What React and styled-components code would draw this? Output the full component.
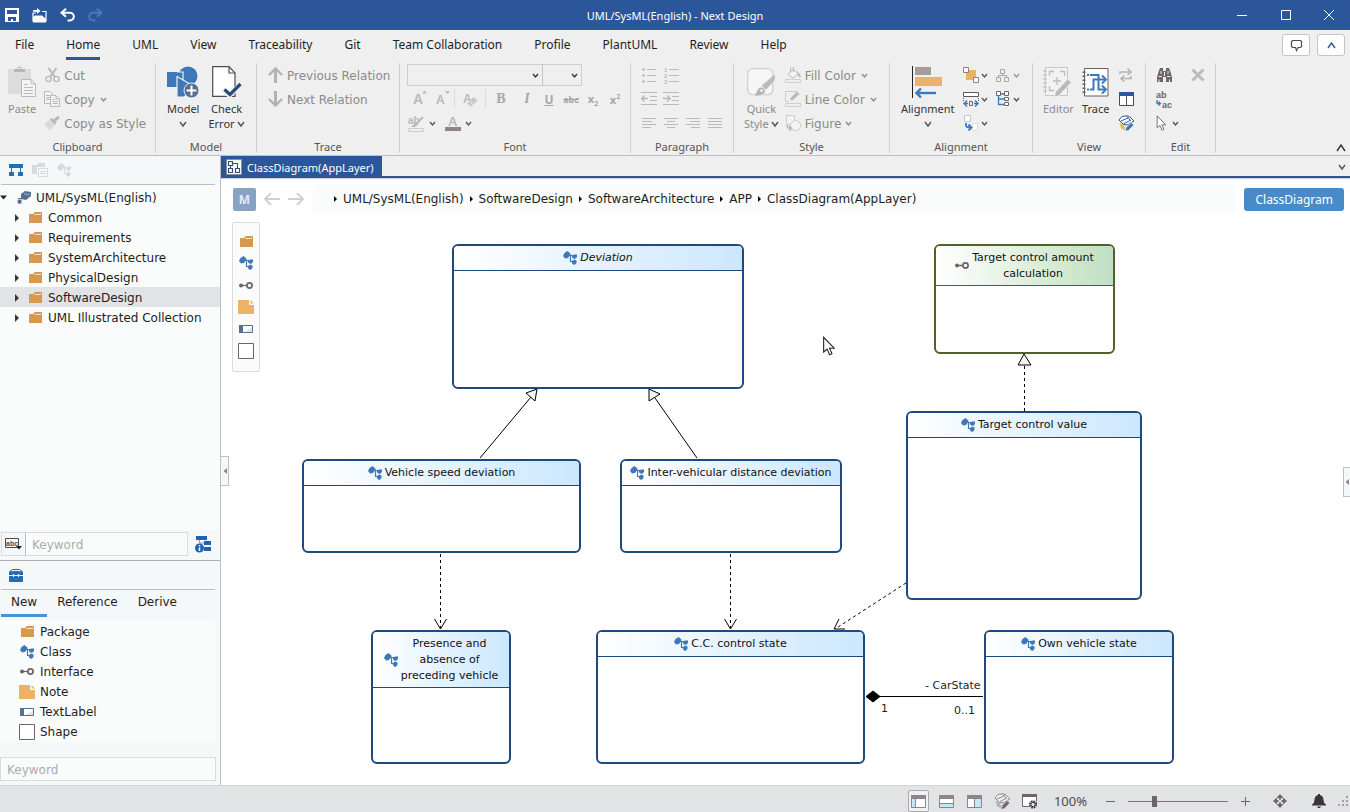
import { useState } from 'react';
import styled, { createGlobalStyle, ThemeProvider } from 'styled-components';

const theme = {
	colors: {
		brand: '#2b579a',
		chrome: '#efefef',
		panel: '#f5f8f8',
		list: '#fafcfc',
		line: '#bdbfc0',
		soft: '#d9dbdc',
		text: '#1e1e1e',
		muted: '#8b8b8b',
		faint: '#b9b9b9',
		blue: '#3d79b8',
		orange: '#d7994c',
		note: '#ebb366',
		slate: '#54708f',
		plum: '#6f6468',
	},
	fonts: {
		ui: "'Noto Sans', 'Open Sans', sans-serif",
		wide: "'DejaVu Sans', 'Noto Sans', sans-serif",
	},
	fontSizes: {
		s: '11px',
		m: '12px',
		l: '13px',
	},
};

const c = theme.colors;

const GlobalStyle = createGlobalStyle`
	* {
		box-sizing: border-box;
	}

	body {
		margin: 0;
		font-family: ${theme.fonts.ui};
		font-size: 12px;
		color: ${c.text};
	}

	button, input, select {
		font: inherit;
		color: inherit;
	}

	button {
		background: none;
		border: 0;
		padding: 0;
	}

	svg {
		display: block;
		flex: none;
	}
`;

/* ---------- icons ---------- */

const Svg = ({ w = 16, h = 16, children, ...rest }) => (
	<svg
		width={w}
		height={h}
		viewBox={`0 0 ${w} ${h}`}
		fill='none'
		aria-hidden='true'
		{...rest}
	>
		{children}
	</svg>
);

const Chevron = ({ color = '#555', up = false, size = 7 }) => (
	<Svg w={size} h={size}>
		<path
			d={
				up
					? `M1 ${size - 2} L${size / 2} 2 L${size - 1} ${size - 2}`
					: `M1 2 L${size / 2} ${size - 2} L${size - 1} 2`
			}
			stroke={color}
			strokeWidth='1.4'
		/>
	</Svg>
);

const SaveIcon = () => (
	<Svg w={14} h={14}>
		<path d='M0 0H14V14H0z' fill='#fff' />
		<path d='M2 2H12V6H2zM3 9H11V13H8V11H6V13H3z' fill={c.brand} />
	</Svg>
);

const OpenIcon = () => (
	<Svg w={15} h={15}>
		<path d='M1 13.5V5H4M10 3.5H14V13.5' stroke='#fff' strokeWidth='1.2' />
		<path d='M1 14.5V9L3 7.5H10L14 11V14.5z' fill='#fff' />
		<path d='M1 3.5V2H5V0L8.5 3L5 6V4z' fill='#fff' />
	</Svg>
);

const UndoIcon = ({ color = '#fff', flip = false }) => (
	<Svg w={15} h={14} transform={flip ? 'scale(-1 1)' : undefined}>
		<path d='M6 0.8L1.5 4.8L6 8.8' stroke={color} strokeWidth='2' />
		<path
			d='M2 4.8H10A3.8 3.8 0 0 1 10 12.4H7.5'
			stroke={color}
			strokeWidth='2'
		/>
	</Svg>
);

const PasteIcon = () => (
	<Svg w={28} h={32}>
		<path d='M0 3H23V28H0z' fill='#dcdcdc' />
		<path d='M6 6V3H9A2.5 2.5 0 0 1 14 3H17V6z' fill='#b5b5b5' />
		<path d='M10 2.5H13' stroke='#efefef' />
		<path
			d='M13.5 13.5H23L27.5 18V30.5H13.5z'
			fill='#f4f4f4'
			stroke='#b9b9b9'
		/>
		<path
			d='M23 13.5V18H27.5M16 18.5H20M16 21.5H25M16 24.5H25M16 27.5H25'
			stroke='#b9b9b9'
		/>
	</Svg>
);

const CutIcon = () => (
	<Svg w={15} h={16}>
		<path d='M3.5 1L10 10M11.5 1L5 10' stroke={c.faint} strokeWidth='2' />
		<circle cx='3.5' cy='12' r='2.6' stroke={c.faint} strokeWidth='1.4' />
		<circle cx='11.5' cy='12' r='2.6' stroke={c.faint} strokeWidth='1.4' />
	</Svg>
);

const CopyIcon = () => (
	<Svg w={16} h={16}>
		<path
			d='M0.5 0.5H6L8.5 3V12.5H0.5z'
			fill='#f4f4f4'
			stroke={c.faint}
		/>
		<path d='M2 4.5H6M2 6.5H6M2 8.5H6' stroke={c.faint} />
		<path
			d='M6.5 4.5H12L15.5 8V15.5H6.5z'
			fill='#f4f4f4'
			stroke={c.faint}
		/>
		<path
			d='M12 4.5V8H15.5M8.5 8.5H11M8.5 10.5H14M8.5 12.5H14'
			stroke={c.faint}
		/>
	</Svg>
);

const BrushIcon = () => (
	<Svg w={16} h={15}>
		<path d='M0 8L5 4L10 9.5L6 14.5z' fill='#d6dadd' />
		<path d='M5.5 3.5L8 2L12.5 7L10.5 9z' fill={c.faint} />
		<path d='M10 5L15 0.8' stroke={c.faint} strokeWidth='3' />
	</Svg>
);

const ModelIcon = () => (
	<Svg w={32} h={32}>
		<circle cx='21' cy='10' r='9.5' fill={c.blue} />
		<path d='M0 6H16V21H0z' fill={c.blue} />
		<path d='M10 6H16V14' stroke={c.chrome} strokeWidth='1.2' />
		<path
			d='M10 10.5L30 22L17 31H10z'
			fill={c.blue}
			stroke={c.chrome}
			strokeWidth='1.2'
		/>
		<circle
			cx='24.5'
			cy='24.5'
			r='7.5'
			fill={c.slate}
			stroke={c.chrome}
		/>
		<path d='M19.5 24.5H29.5M24.5 19.5V29.5' stroke='#fff' strokeWidth='2' />
	</Svg>
);

const CheckErrorIcon = () => (
	<Svg w={30} h={32}>
		<path
			d='M0.7 0.7H17L23 7V30.3H0.7z'
			fill='#fff'
			stroke='#54494d'
			strokeWidth='1.2'
		/>
		<path d='M17 0.7V7H23' stroke='#54494d' strokeWidth='1.2' />
		<path d='M11 23.5L17.5 29.5L29 18' stroke={c.chrome} strokeWidth='5' />
		<path d='M12.5 23.5L18 28.5L28.5 18' stroke='#244e7d' strokeWidth='3.2' />
	</Svg>
);

const RelationArrow = ({ down = false }) => (
	<Svg w={15} h={16} transform={down ? 'scale(1 -1)' : undefined}>
		<path d='M7.5 16V2' stroke='#b2b2b2' strokeWidth='3' />
		<path d='M1 8L7.5 1.5L14 8' stroke='#b2b2b2' strokeWidth='2.4' />
	</Svg>
);

const Letters = styled.text`
	font-family: 'Liberation Sans', sans-serif;
	font-weight: 700;
	fill: ${props => props.$fill || props.theme.colors.faint};
`;

const EraserIcon = () => (
	<Svg w={15} h={15}>
		<Letters x='0' y='11' fontSize='12'>
			A
		</Letters>
		<path d='M4 11.5L10.5 5L14.5 8.5L8.5 14.5z' fill='#c9c9c9' />
		<path d='M6.5 9L10.5 13' stroke={c.chrome} />
	</Svg>
);

const HighlightIcon = () => (
	<Svg w={17} h={18}>
		<Letters x='0' y='10' fontSize='10'>
			ab
		</Letters>
		<path d='M15 3L8 10' stroke={c.faint} strokeWidth='2' />
		<path d='M3 13L8 8.5L10 10.5L7 13z' fill={c.faint} />
		<path d='M0.5 14.5H15.5V17.5H0.5z' stroke='#cfcfcf' />
	</Svg>
);

const FontColorIcon = () => (
	<Svg w={16} h={16}>
		<Letters x='3' y='11' fontSize='13'>
			A
		</Letters>
		<path d='M0 12H16V16H0z' fill='#8f8389' />
	</Svg>
);

const FontSizeIcon = ({ size = 14, down = false }) => (
	<Svg w={14} h={18}>
		<Letters x='0' y='14' fontSize={size}>
			A
		</Letters>
		<path d={down ? 'M9 1H14L11.5 4z' : 'M9 3.5H14L11.5 0.5z'} fill={c.faint} />
	</Svg>
);

const BulletIcon = () => (
	<Svg w={15} h={16}>
		<path
			d='M5 2.5H14M5 8.5H14M5 14.5H14'
			stroke={c.faint}
			shapeRendering='crispEdges'
		/>
		<circle cx='1.5' cy='2.5' r='1.3' fill={c.faint} />
		<circle cx='1.5' cy='8.5' r='1.3' fill={c.faint} />
		<circle cx='1.5' cy='14.5' r='1.3' fill={c.faint} />
	</Svg>
);

const NumberedIcon = () => (
	<Svg w={15} h={20}>
		<path
			d='M5 4.5H15M5 10.5H15M5 16.5H15'
			stroke={c.faint}
			shapeRendering='crispEdges'
		/>
		{[1, 2, 3].map(n => (
			<Letters key={n} x='0' y={n * 6 + 1} fontSize='6'>
				{n}
			</Letters>
		))}
	</Svg>
);

const IndentIcon = ({ out = false }) => (
	<Svg w={16} h={14}>
		<path
			d='M0 0.5H16M9 4.5H16M9 8.5H16M0 12.5H16'
			stroke={c.faint}
			shapeRendering='crispEdges'
		/>
		<path d='M0 6.5H7' stroke={c.faint} strokeWidth='1.5' />
		<path
			d={out ? 'M3.5 3.5L0.8 6.5L3.5 9.5' : 'M4 3.5L7 6.5L4 9.5'}
			stroke={c.faint}
			strokeWidth='1.5'
		/>
	</Svg>
);

const alignLines = {
	left: 'M0 0.5H14M0 3.5H10M0 6.5H14M0 9.5H9',
	center: 'M0 0.5H14M3 3.5H11M0 6.5H14M3 9.5H11',
	right: 'M0 0.5H14M4 3.5H14M0 6.5H14M5 9.5H14',
	justify: 'M0 0.5H14M0 3.5H14M0 6.5H14M0 9.5H14',
};

const AlignTextIcon = ({ kind }) => (
	<Svg w={14} h={11}>
		<path
			d={alignLines[kind]}
			stroke={c.faint}
			shapeRendering='crispEdges'
		/>
	</Svg>
);

const QuickStyleIcon = () => (
	<Svg w={28} h={30}>
		<rect
			x='0.7'
			y='1.7'
			width='25'
			height='26'
			rx='5'
			fill='#f6f6f6'
			stroke='#d0d0d0'
			strokeWidth='1.3'
		/>
		<path
			d='M28 7V13L19 23L14.5 18.5z'
			fill='#b9b9b9'
			stroke={c.chrome}
			strokeWidth='0.6'
		/>
		<path
			d='M6 28.5C10 27.5 9 21 14 20C18 20 20 25 16 27.5C13 29.5 9 29.5 6 28.5z'
			fill='#b3b3b3'
			stroke={c.chrome}
		/>
		<circle cx='14.5' cy='23.5' r='1.6' fill={c.chrome} />
	</Svg>
);

const FillIcon = () => (
	<Svg w={16} h={16}>
		<path d='M3 7.5L8.5 2L13 6.5L8 11z' fill='#f4f4f4' stroke={c.faint} />
		<path d='M5.5 5V1.5A1.5 1.5 0 0 1 8.5 1.5V5' stroke={c.faint} />
		<path d='M12 4L15.5 8V11L13 9z' fill={c.faint} />
		<path d='M0.5 12.5H15.5V15.5H0.5z' stroke='#cfcfcf' />
	</Svg>
);

const LineColorIcon = () => (
	<Svg w={16} h={16}>
		<path d='M12 0.5H0.5V10.5H4' stroke='#cbcbcb' />
		<path d='M5 9.5L6 6.5L12 0.5L14.5 3L8 9z' fill={c.faint} />
		<path d='M0.5 12.5H15.5V15.5H0.5z' stroke='#cfcfcf' />
	</Svg>
);

const FigureIcon = () => (
	<Svg w={16} h={16}>
		<path d='M1.5 0.5H9.5V9.5H1.5z' stroke='#cbcbcb' fill='#f4f4f4' />
		<circle cx='10.5' cy='10.5' r='5' fill='#f4f4f4' stroke='#cbcbcb' />
		<path
			d='M2 10C2 13 3 13.5 6 13.5M4 11L6.5 13.5L4 16'
			stroke={c.faint}
			strokeWidth='1.6'
		/>
	</Svg>
);

const AlignmentIcon = () => (
	<Svg w={31} h={32}>
		<path d='M0.5 0V32' stroke='#222' />
		<path d='M3 1H19V9H3z' fill='#a99b9b' />
		<path d='M3 11H30V20H3z' fill={c.note} />
		<path d='M4 27H24' stroke={c.blue} strokeWidth='2.4' />
		<path d='M9 22.5L4.5 27L9 31.5' stroke={c.blue} strokeWidth='2.4' />
	</Svg>
);

const OrderIcon = () => (
	<Svg>
		<path d='M3 3H13V13H3z' fill={c.note} />
		<path
			d='M0.5 0.5H5.5V5.5H0.5zM10.5 10.5H15.5V15.5H10.5z'
			fill='#fff'
			stroke='#8c8184'
		/>
	</Svg>
);

const SizeIcon = () => (
	<Svg>
		<path d='M0.5 1.5H15.5V5.5H0.5z' fill='#fff' stroke='#5f5559' />
		<path d='M0.5 7V10M15.5 7V10' stroke='#5f5559' strokeDasharray='1 1' />
		<path
			d='M4 9.5L1 12.5L4 15.5M12 9.5L15 12.5L12 15.5M1 12.5H5M11 12.5H15'
			stroke={c.blue}
			strokeWidth='1.5'
		/>
		<path d='M6.5 10.5H9.5V14.5H6.5z' stroke={c.plum} />
	</Svg>
);

const MoveToIcon = () => (
	<Svg>
		<path d='M1.5 0.5H7.5V6.5H1.5z' fill='#fff' stroke='#b9cbe0' />
		<path d='M9.5 8.5H14.5V15.5H9.5z' fill='#fff' stroke='#dedede' />
		<path
			d='M3 8V10.5Q3 12.5 8 12.5M5.5 9.5L8.5 12.5L5.5 15.5'
			stroke={c.blue}
			strokeWidth='1.8'
		/>
	</Svg>
);

const HierarchyIcon = () => (
	<Svg w={14} h={14}>
		<path
			d='M4.5 1.5H8.5V5.5H4.5zM0.5 9.5H4.5V13.5H0.5zM8.5 9.5H12.5V13.5H8.5z'
			stroke='#a8a8a8'
		/>
		<path d='M6.5 5.5V7.5M2.5 9.5V7.5H10.5V9.5' stroke='#a8a8a8' />
	</Svg>
);

const TreeLayoutIcon = () => (
	<Svg w={14} h={16}>
		<path
			d='M2.5 5V13.5H8M2.5 8H8M5 3H8'
			stroke={c.blue}
			strokeWidth='1.3'
		/>
		<path
			d='M0.5 0.5H4.5V4.5H0.5zM8.5 0.5H12.5V4.5H8.5zM8.5 6.5H12.5V9.5H8.5zM8.5 11.5H12.5V14.5H8.5z'
			fill='#fff'
			stroke='#6b6367'
		/>
	</Svg>
);

const EditorIcon = () => (
	<Svg w={30} h={31}>
		<path d='M2.5 0.5H24.5V28.5H2.5z' stroke='#c6c6c6' fill='#f2f2f2' />
		<path d='M2 3V27' stroke='#c6c6c6' strokeWidth='3' strokeDasharray='2 2' />
		<path
			d='M6.5 9V4.5H11M17 4.5H21.5V9M6.5 19V23.5H11M14 10V18M10 14H18'
			stroke='#bcbcbc'
			strokeWidth='1.3'
		/>
		<path
			d='M11 30.5L12.5 25L24.5 12L28.5 15.5L16 28.5z'
			fill='#b9b9b9'
			stroke={c.chrome}
		/>
	</Svg>
);

const TraceIcon = () => (
	<Svg w={27} h={29}>
		<path d='M2.5 0.5H26V28H2.5z' fill='#fff' stroke='#6b5f64' />
		<path
			d='M2 3.5V27'
			stroke='#6b5f64'
			strokeWidth='3'
			strokeDasharray='1.5 2.5'
		/>
		<path
			d='M5 7H9M5 21.5H10'
			stroke={c.blue}
			strokeWidth='2'
			strokeDasharray='2 1'
		/>
		<path
			d='M9 7H16.5V21.5H24M10 21.5H11.5V11.5H24'
			stroke={c.blue}
			strokeWidth='2'
		/>
		<path
			d='M20 7.5L24 11.5L20 15.5M20 17.5L24 21.5L20 25.5'
			stroke={c.blue}
			strokeWidth='2'
		/>
	</Svg>
);

const SwapIcon = () => (
	<Svg w={14} h={14}>
		<path
			d='M1 6V4H12M8.5 0.5L12 4L8.5 7'
			stroke='#b5b5b5'
			strokeWidth='1.6'
		/>
		<path
			d='M12 8V10.5H2M5.5 7.5L2 10.5L5.5 13.5'
			stroke='#b5b5b5'
			strokeWidth='1.6'
		/>
	</Svg>
);

const SplitIcon = () => (
	<Svg w={15} h={14}>
		<path d='M0.5 1V13.5H14.5V1' fill='#fff' stroke='#54494d' />
		<path d='M7.5 4V13' stroke='#54494d' />
		<path d='M0 0H15V4H0z' fill={c.brand} />
	</Svg>
);

const PaintIcon = ({ mono = false }) => (
	<Svg w={17} h={17}>
		<path
			d='M1 5L4 1.5L9 0.8L12 2L16 6L9 10L5 9z'
			fill={mono ? '#f0f0f0' : '#fff'}
			stroke={mono ? '#8d8589' : c.brand}
		/>
		<path
			d='M3 6L10 3M6 8.5L13 5M9 1.5L12 5'
			stroke={mono ? '#8d8589' : c.brand}
		/>
		<path d='M1.5 8L6 10L8 16L3 13z' fill={mono ? '#b5b0b2' : c.note} />
		<path
			d='M7 16.5L8 12.5L13 7.5L16 10L10.5 15.5z'
			fill={mono ? '#77696f' : c.blue}
			stroke={mono ? '#e2e3e5' : '#fff'}
			strokeWidth='0.7'
		/>
	</Svg>
);

const BinocularsIcon = () => (
	<Svg w={15} h={14}>
		<path
			d='M3 0H6V3H9V0H12L13.5 4L15 9V14H9V9H6V14H0V9L1.5 4z'
			fill={c.plum}
		/>
		<path
			d='M1.5 8.5H5M10 8.5H13.5M4 3V6M11 3V6M2 11.5V14M12.5 11.5V14M7.5 4V8'
			stroke={c.chrome}
		/>
	</Svg>
);

const ReplaceIcon = () => (
	<Svg w={17} h={22}>
		<Letters x='0' y='10' fontSize='9' $fill={c.plum}>
			ab
		</Letters>
		<Letters x='6' y='20' fontSize='9' $fill={c.plum}>
			ac
		</Letters>
		<path
			d='M1 12V15.5H4M2.5 13.5L4.5 15.5L2.5 17.5'
			stroke={c.blue}
			strokeWidth='1.3'
		/>
	</Svg>
);

const PointerIcon = ({ w = 11, h = 16, stroke = '#6f6468' }) => (
	<svg width={w} height={h} viewBox='0 0 11 18' fill='none' aria-hidden='true'>
		<path
			d='M0.6 1V14.5L3.8 11.8L6 17L8.2 16L6 11H10.2z'
			fill='#fff'
			stroke={stroke}
		/>
	</svg>
);

const DeleteIcon = () => (
	<Svg w={14} h={14}>
		<path
			d='M1.5 1.5L12.5 12.5M12.5 1.5L1.5 12.5'
			stroke='#bcbcbc'
			strokeWidth='3'
		/>
	</Svg>
);

const CommentIcon = () => (
	<Svg w={13} h={13}>
		<path
			d='M2.5 1.5H10.5L11.5 2.5V7.5L10.5 8.5H8L6.5 11.5L5.5 8.5H2.5L1.5 7.5V2.5z'
			stroke='#54494d'
			strokeWidth='1.2'
		/>
	</Svg>
);

const StructureIcon = () => (
	<Svg w={14} h={12}>
		<path d='M0 0H14V4H0zM0 8H5V12H0zM9 8H14V12H9z' fill='#1d6fb8' />
		<path d='M2.5 4V9M11.5 4V9' stroke='#1d6fb8' />
	</Svg>
);

const DocsIcon = () => (
	<Svg w={16} h={14}>
		<path d='M0 2H5L6 0H13V4H5V11H0z' fill='#d5dae1' />
		<path d='M6.5 5.5H15.5V13.5H6.5z' fill='#f5f8f8' stroke='#d5dae1' />
		<path d='M8 8.5H14M8 10.5H14' stroke='#d5dae1' />
	</Svg>
);

const ClassIcon = ({ color = c.blue }) => (
	<Svg w={14} h={14}>
		<path d='M0 5L1.5 2L4.5 0L7.8 3L5 7L2 7.5z' fill={color} />
		<path d='M6 4.5H10M7.5 4.5V10.5H10' stroke={color} strokeWidth='1.2' />
		<path
			d='M8.8 5L11 3.5L14 3.5V6L12 8L9.5 7zM8.5 10.5L11 8.5L13.5 9.5V12L11.5 14L9.5 13z'
			fill={color}
		/>
	</Svg>
);

const ProjectIcon = () => (
	<Svg w={14} h={13}>
		<path d='M4 3L8 0L14 1V5L9 9L4 8z' fill={c.slate} />
		<path d='M7 3L12.5 3.5' stroke='#9fb0c2' />
		<path d='M1 7H4.5V12L3 13L0.5 12z' fill={c.slate} />
		<path d='M1 8.5H4.5' stroke='#c4ced8' />
	</Svg>
);

const FolderIcon = () => (
	<Svg w={13} h={11}>
		<path d='M0 2H4.5L5.5 0H13V11H0z' fill={c.orange} />
		<path d='M5.5 2.5H11.5V1.5' stroke='#f6e3c8' />
	</Svg>
);

const InterfaceIcon = () => (
	<Svg w={14} h={7}>
		<circle cx='2' cy='3.5' r='2' fill='#6b6367' />
		<path d='M3 3.5H8' stroke='#6b6367' strokeWidth='1.3' />
		<circle cx='10.5' cy='3.5' r='2.6' stroke='#6b6367' strokeWidth='1.7' />
	</Svg>
);

const NoteIcon = () => (
	<Svg w={16} h={14}>
		<path d='M0 0H11V5H16V14H0zM12.5 0L16 3.5H12.5z' fill={c.note} />
	</Svg>
);

const TextLabelIcon = () => (
	<Svg w={14} h={8}>
		<path d='M0.5 0.5H13.5V7.5H0.5z' fill='#fff' stroke={c.slate} />
		<path d='M0 0H4V8H0z' fill={c.slate} />
		<path d='M6 7L13 2V7z' fill='#dfe5ea' />
	</Svg>
);

const ShapeIcon = () => (
	<Svg w={16} h={16}>
		<path d='M0.5 0.5H15.5V15.5H0.5z' fill='#fff' stroke='#6f6468' />
	</Svg>
);

const AbcIcon = () => (
	<Svg w={17} h={12}>
		<path d='M0.5 0.5H13.5V9.5H0.5z' stroke='#54494d' />
		<Letters x='1' y='8' fontSize='7' $fill='#54494d'>
			abc
		</Letters>
		<path d='M11 8H17L14 11.5z' fill='#222' />
	</Svg>
);

const FilterIcon = () => (
	<Svg w={16} h={17}>
		<path d='M1 0H12V4H1zM9 5H16V9H9zM9 11H16V15H9z' fill='#1d63b2' />
		<path d='M4.5 4V7H9' stroke='#999' />
		<circle cx='4.5' cy='12' r='4.5' fill='#1d63b2' />
		<path d='M4.5 9V10.5M4.5 11.5V15' stroke='#fff' strokeWidth='1.5' />
	</Svg>
);

const ToolboxIcon = () => (
	<Svg w={14} h={13}>
		<path d='M2 1L4 0H10L12 1L14 3V6H0V3z' fill='#1d6fb8' />
		<path d='M3 2.5V1.5H11V2.5' stroke='#f5f8f8' />
		<path d='M0 7H14V13H0z' fill='#1d6fb8' />
		<path d='M4.5 5V8M9.5 5V8' stroke='#fff' />
	</Svg>
);

const DiagramIcon = () => (
	<Svg>
		<path d='M0.5 0.5H15.5V15.5H0.5z' fill='#fff' stroke='#88909c' />
		<path
			d='M2.5 2.5H6.5V6.5H2.5zM2.5 9.5H6.5V13.5H2.5zM9.5 9.5H13.5V13.5H9.5zM4.5 6.5V9.5M6.5 4.5H11.5V9.5'
			stroke='#33507c'
			strokeWidth='1.2'
		/>
	</Svg>
);

const HistoryArrow = ({ forward = false }) => (
	<Svg w={16} h={14} transform={forward ? 'scale(-1 1)' : undefined}>
		<path d='M1 7H16M7 1L1 7L7 13' stroke='#cfcfcf' strokeWidth='1.8' />
	</Svg>
);

const layoutFills = {
	left: 'M1 4H4V12H1z',
	bottom: 'M1 9H14V12H1z',
	right: 'M8 4H14V12H8z',
};

const layoutLines = {
	left: 'M4.5 4V12',
	bottom: 'M1 8.5H14',
	right: 'M7.5 4V12',
};

const LayoutIcon = ({ kind }) => (
	<Svg w={15} h={13}>
		<path d='M0.5 0.5H14.5V12.5H0.5z' fill='#fff' stroke='#8d8589' />
		<path d={layoutFills[kind]} fill='#c4e6f6' />
		<path d={layoutLines[kind]} stroke='#8d8589' />
		<path d='M0 0H15V4H0z' fill='#8d8589' />
	</Svg>
);

const WindowGearIcon = () => (
	<Svg w={16} h={15}>
		<path d='M0.5 0.5H14.5V12.5H0.5z' fill='#fff' stroke='#6f6468' />
		<path d='M0 0H15V3H0z' fill='#6f6468' />
		<circle cx='11' cy='10.5' r='4.5' fill='#e2e3e5' />
		<circle
			cx='11'
			cy='10.5'
			r='3.2'
			stroke='#3c3438'
			strokeWidth='1.8'
			strokeDasharray='1.6 0.91'
		/>
		<circle cx='11' cy='10.5' r='2.2' stroke='#3c3438' />
	</Svg>
);

const MoveIcon = () => (
	<Svg w={14} h={14}>
		<path
			d='M7 0L10.5 4H3.5zM7 14L3.5 10H10.5zM0 7L4 3.5V10.5zM14 7L10 10.5V3.5z'
			fill='#6f6468'
		/>
		<path d='M7 3V5.5M7 8.5V11M3 7H5.5M8.5 7H11' stroke='#6f6468' strokeWidth='2' />
	</Svg>
);

const BellIcon = () => (
	<Svg w={14} h={14}>
		<path
			d='M6 0H8V1Q11.5 2 11.5 6Q11.5 9 14 10.5V11.5H0V10.5Q2.5 9 2.5 6Q2.5 2 6 1zM5 12.5H9L8 14H6z'
			fill='#3c3438'
		/>
	</Svg>
);

const GripIcon = () => (
	<Svg w={11} h={11}>
		<path
			d='M8 0H10V2H8zM4 4H6V6H4zM8 4H10V6H8zM0 8H2V10H0zM4 8H6V10H4zM8 8H10V10H8z'
			fill='#a99fa3'
		/>
	</Svg>
);

/* ---------- frame ---------- */

const Window = styled.div`
	display: flex;
	flex-direction: column;
	min-height: 100vh;
	background-color: #fff;
`;

const TitleBar = styled.header`
	display: grid;
	grid-template-columns: 1fr auto 1fr;
	align-items: center;
	height: 30px;
	background-color: ${props => props.theme.colors.brand};
	color: #fff;
`;

const QuickTools = styled.div`
	display: flex;
	align-items: center;
	gap: 13px;
	padding-left: 5px;
`;

const WindowTitle = styled.h1`
	margin: 0;
	font-size: ${props => props.theme.fontSizes.s};
	font-weight: 400;
`;

const WindowButtons = styled.div`
	display: flex;
	justify-content: flex-end;

	button {
		display: grid;
		place-items: center;
		width: 44px;
		height: 30px;
	}

	button:last-child {
		width: 42px;
	}
`;

const MenuBar = styled.nav`
	display: flex;
	align-items: flex-start;
	height: 33px;
	padding-left: 15px;
	gap: 32px;
	background-color: ${props => props.theme.colors.chrome};
`;

const MenuItem = styled.button`
	height: 30px;
	padding-top: 1px;
	white-space: nowrap;
	font-size: ${props => props.theme.fontSizes.m};
	border-bottom: 3px solid
		${props => (props.$active ? props.theme.colors.brand : 'transparent')};
`;

const MenuActions = styled.div`
	display: flex;
	gap: 7px;
	margin: 4px 5px 0 auto;

	button {
		display: grid;
		place-items: center;
		width: 28px;
		height: 22px;
		border: 1px solid #c4c4c4;
		border-radius: 3px;
		background-color: #fdfdfd;
	}
`;

const Ribbon = styled.div`
	display: flex;
	padding-bottom: 2px;
	background-color: ${props => props.theme.colors.chrome};
	border-bottom: 1px solid ${props => props.theme.colors.line};
`;

const Group = styled.section`
	display: flex;
	flex-direction: column;
	flex: none;
	width: ${props => props.$width}px;
	border-right: 1px solid #cfd0d0;
`;

const GroupBody = styled.div`
	display: flex;
	height: 72px;
	gap: ${props => props.$gap || 0}px;
	padding-left: ${props => props.$pad || 0}px;
`;

const GroupLabel = styled.h2`
	margin: 5px 0 0;
	font-size: ${props => props.theme.fontSizes.s};
	font-weight: 400;
	line-height: 13px;
	text-align: center;
	color: #555;
`;

const CollapseRibbon = styled.button`
	align-self: flex-end;
	margin: 0 4px 0 auto;
`;

const BigButton = styled.button`
	display: flex;
	flex-direction: column;
	align-items: center;
	padding-top: 3px;
	font-size: ${props => props.theme.fontSizes.s};
	line-height: 15px;
	white-space: nowrap;
	color: ${props => (props.disabled ? props.theme.colors.muted : '#333')};
`;

const BigIcon = styled.span`
	display: flex;
	align-items: center;
	height: 32px;
	margin-bottom: 3px;
`;

const BigLine = styled.span`
	display: flex;
	align-items: center;
	gap: 2px;
	height: 15px;
`;

const Column = styled.div`
	display: flex;
	flex-direction: column;
	align-items: flex-start;
`;

const Row = styled.div`
	display: flex;
	align-items: center;
	height: 24px;
	gap: ${props => props.$gap || 0}px;
`;

const SmallButton = styled.button`
	display: flex;
	align-items: center;
	height: 24px;
	gap: 4px;
	font-family: ${props => props.theme.fonts.wide};
	font-size: ${props => props.theme.fontSizes.m};
	white-space: nowrap;
	color: ${props => props.theme.colors.muted};
`;

const SmallLabel = styled.span`
	padding-top: 2px;
`;

const IconSlot = styled.span`
	display: flex;
	justify-content: center;
	width: 16px;
`;

const ChevronSlot = styled.span`
	margin-left: ${props => (props.$tight ? 0 : 1)}px;
`;

const ToolButton = styled.button`
	display: flex;
	align-items: center;
	justify-content: center;
	min-width: ${props => props.$width || 22}px;
	height: 24px;
	gap: ${props => props.$gap || 0}px;
`;

const LetterButton = styled(ToolButton)`
	font-family: ${props =>
		props.$serif ? "'Liberation Serif', serif" : props.theme.fonts.ui};
	font-size: ${props => props.$size || 14}px;
	font-weight: 700;
	font-style: ${props => (props.$italic ? 'italic' : 'normal')};
	text-decoration: ${props => props.$line || 'none'};
	color: #aaa4a6;

	sub,
	sup {
		font-size: 7px;
		line-height: 1;
	}
`;

const ToolDivider = styled.span`
	width: 1px;
	height: 20px;
	background-color: #dcdcdc;
`;

const SelectBox = styled.label`
	position: relative;
	display: block;
	width: ${props => props.$width}px;
	margin-right: -1px;

	select {
		appearance: none;
		display: block;
		width: 100%;
		height: 22px;
		border: 1px solid #c0c0c0;
		border-radius: 0;
		background-color: transparent;
	}

	svg {
		position: absolute;
		right: 4px;
		top: 8px;
		pointer-events: none;
	}
`;

/* ---------- sidebar ---------- */

const Main = styled.div`
	display: flex;
	flex: 1;
`;

const Sidebar = styled.aside`
	display: flex;
	flex-direction: column;
	flex: none;
	width: 221px;
	font-family: ${props => props.theme.fonts.wide};
	background-color: ${props => props.theme.colors.panel};
	border-right: 1px solid ${props => props.theme.colors.line};
`;

const PanelTools = styled.div`
	display: flex;
	align-items: center;
	gap: 9px;
	height: 29px;
	margin: 0 5px 0 1px;
	padding-left: 8px;
	border-bottom: 1px solid ${props => props.theme.colors.line};
`;

const TreePanel = styled.div`
	flex: 1;
	padding-top: 2px;
	background-color: ${props => props.theme.colors.list};
`;

const TreeList = styled.ul`
	list-style: none;
	margin: 0;
	padding: 0;
`;

const TreeItem = styled.button`
	display: flex;
	align-items: center;
	gap: ${props => (props.$root ? 5 : 6)}px;
	width: 100%;
	height: 20px;
	padding-top: 1px;
	padding-left: ${props => (props.$root ? 0 : 14)}px;
	font-size: ${props => props.theme.fontSizes.m};
	white-space: nowrap;
	background-color: ${props => (props.$selected ? '#e2e3e5' : 'transparent')};
`;

const Caret = styled.span`
	flex: none;
	width: ${props => (props.$open ? 12 : 9)}px;
`;

const SearchRow = styled.div`
	display: flex;
	align-items: center;
	padding: 2px 9px 4px 1px;
	background-color: ${props => props.theme.colors.panel};
`;

const SearchMode = styled.button`
	display: grid;
	place-items: center;
	width: 25px;
	height: 24px;
	border: 1px solid ${props => props.theme.colors.soft};
	border-right-color: #b8bec4;
`;

const KeywordInput = styled.input`
	flex: 1;
	min-width: 0;
	height: 24px;
	padding: 1px 6px 0;
	font-size: ${props => props.theme.fontSizes.m};
	border: 1px solid ${props => props.theme.colors.soft};
	border-left-width: ${props => (props.$joined ? 0 : 1)}px;
	border-radius: 0;
	background-color: ${props => props.theme.colors.list};

	&::placeholder {
		color: #a9adad;
		opacity: 1;
	}
`;

const FilterButton = styled.button`
	margin-left: 7px;
`;

const Toolbox = styled.div`
	border-top: 1px solid #b3abae;
`;

const TabStrip = styled.div`
	display: flex;
	height: 27px;
	margin-bottom: 3px;
	padding-left: 1px;
`;

const Tab = styled.button`
	padding: 0 10px 1px;
	font-size: ${props => props.theme.fontSizes.m};
	border-bottom: 3px solid ${props => (props.$active ? '#4a92d4' : 'transparent')};
`;

const ToolList = styled.ul`
	list-style: none;
	margin: 0 5px 15px 0;
	padding: 1px 0 1px 19px;
	background-color: ${props => props.theme.colors.list};
`;

const ToolItem = styled.button`
	display: flex;
	align-items: center;
	gap: 5px;
	height: 20px;
	padding-top: 1px;
	font-size: ${props => props.theme.fontSizes.m};
`;

const ToolboxSearch = styled.div`
	display: flex;
	padding: 0 4px 4px 0;
`;

/* ---------- document ---------- */

const Document = styled.main`
	display: flex;
	flex-direction: column;
	flex: 1;
	min-width: 0;
`;

const DocTabs = styled.div`
	display: flex;
	align-items: stretch;
	height: 23px;
	background-color: ${props => props.theme.colors.chrome};
	border-bottom: 1px solid #cdd0d4;
	box-shadow: inset 0 -2px 0 ${props => props.theme.colors.brand};
`;

const DocTab = styled.button`
	display: flex;
	align-items: center;
	gap: 5px;
	padding: 0 8px 0 5px;
	font-size: ${props => props.theme.fontSizes.s};
	color: #fff;
	background-color: ${props => props.theme.colors.brand};
`;

const DocMenu = styled.button`
	margin: 0 4px 0 auto;
`;

const PathBar = styled.div`
	display: flex;
	align-items: center;
	gap: 8px;
	padding: 5px 6px 0 12px;
`;

const ModeButton = styled.button`
	width: 23px;
	height: 23px;
	font-weight: 700;
	color: #e4eaf1;
	background-color: #87a2c4;
	border-radius: 2px;
`;

const Breadcrumb = styled.nav`
	display: flex;
	align-items: center;
	flex: 1;
	gap: 6px;
	height: 30px;
	margin-left: 1px;
	padding-left: 21px;
	font-family: ${props => props.theme.fonts.wide};
	white-space: nowrap;
	background-color: ${props => props.theme.colors.list};
	border-radius: 4px;

	a {
		font-size: ${props => props.theme.fontSizes.m};
		color: inherit;
		text-decoration: none;
	}
`;

const ViewButton = styled.button`
	height: 23px;
	padding: 0 11px;
	font-size: ${props => props.theme.fontSizes.m};
	color: #fff;
	background-color: #488bc8;
	border-radius: 3px;
`;

const Canvas = styled.div`
	position: relative;
	flex: 1;
	overflow: hidden;
	font-family: ${props => props.theme.fonts.wide};
`;

const Edges = styled.svg`
	position: absolute;
	inset: 0;
	width: 100%;
	height: 100%;
`;

const Palette = styled.div`
	position: absolute;
	left: 11px;
	top: 8px;
	display: flex;
	flex-direction: column;
	width: 28px;
	padding: 7px 0 9px;
	background-color: ${props => props.theme.colors.list};
	border: 1px solid ${props => props.theme.colors.soft};
	border-radius: 2px;

	button {
		display: grid;
		place-items: center;
		height: 22px;
	}
`;

const Handle = styled.button`
	position: absolute;
	${props => (props.$side === 'left' ? 'left: 0; top: 242px;' : 'right: -1px; top: 253px;')}
	display: grid;
	place-items: center;
	width: 8px;
	height: 30px;
	background-color: #f5f8f8;
	border: 1px solid ${props => props.theme.colors.line};
	border-left-width: ${props => (props.$side === 'left' ? 0 : 1)}px;
`;

const NodeBox = styled.article`
	position: absolute;
	left: ${props => props.$x}px;
	top: ${props => props.$y}px;
	width: ${props => props.$w}px;
	height: ${props => props.$h}px;
	border: 2px solid ${props => (props.$green ? '#4f6228' : '#1f497d')};
	border-radius: 6px;
	background-color: #fff;
	overflow: hidden;
`;

const NodeHeader = styled.header`
	display: flex;
	align-items: center;
	justify-content: center;
	gap: 3px;
	height: ${props => props.$h}px;
	border-bottom: 1px solid ${props => (props.$green ? '#4f6228' : '#1f497d')};
	background-image: linear-gradient(
		90deg,
		#fff,
		${props => (props.$green ? '#d0e8cc 75%, #bfdfc5' : '#cbe7fe')}
	);
`;

const NodeTitle = styled.h3`
	margin: 0;
	font-size: ${props => props.theme.fontSizes.s};
	font-weight: 400;
	font-style: ${props => (props.$abstract ? 'italic' : 'normal')};
	line-height: 16px;
	text-align: center;
	white-space: pre;
	color: #111;
`;

const EdgeLabel = styled.span`
	position: absolute;
	left: ${props => props.$x}px;
	top: ${props => props.$y}px;
	font-size: ${props => props.theme.fontSizes.s};
	line-height: 16px;
	white-space: nowrap;
`;

const MouseCursor = styled.span`
	position: absolute;
	left: 602px;
	top: 122px;
`;

/* ---------- status bar ---------- */

const StatusBar = styled.footer`
	display: flex;
	align-items: center;
	justify-content: flex-end;
	gap: 7px;
	height: 27px;
	padding: 4px 1px 0 0;
	background-color: #e2e3e5;
	border-top: 1px solid #d2d4d6;

	button {
		display: grid;
		place-items: center;
		width: 21px;
		height: 22px;
	}
`;

const PaneToggle = styled.button`
	border: 1px solid ${props => (props.$on ? '#aaa' : 'transparent')};
	border-radius: 2px;
	background-color: ${props => (props.$on ? '#f0f0f0' : 'transparent')};
`;

const Zoom = styled.div`
	display: flex;
	align-items: center;
	gap: 7px;
	margin-left: 6px;
	color: #54494d;

	label {
		margin-right: 6px;
		font-size: ${props => props.theme.fontSizes.l};
	}
`;

const ZoomSlider = styled.input`
	appearance: none;
	width: 100px;
	height: 12px;
	margin: 0;
	background: linear-gradient(#7d7176, #7d7176) center / 100% 1px no-repeat;

	&::-webkit-slider-thumb {
		appearance: none;
		width: 5px;
		height: 11px;
		background-color: #6f6468;
	}
`;

const StatusEnd = styled.div`
	display: flex;
	align-items: center;
	gap: 18px;
	margin: 0 2px 0 6px;
`;

/* ---------- data ---------- */

const menus = [
	'File',
	'Home',
	'UML',
	'View',
	'Traceability',
	'Git',
	'Team Collaboration',
	'Profile',
	'PlantUML',
	'Review',
	'Help',
];

const folders = [
	'Common',
	'Requirements',
	'SystemArchitecture',
	'PhysicalDesign',
	'SoftwareDesign',
	'UML Illustrated Collection',
];

const elements = [
	{ name: 'Package', icon: <FolderIcon /> },
	{ name: 'Class', icon: <ClassIcon /> },
	{ name: 'Interface', icon: <InterfaceIcon /> },
	{ name: 'Note', icon: <NoteIcon /> },
	{ name: 'TextLabel', icon: <TextLabelIcon /> },
	{ name: 'Shape', icon: <ShapeIcon /> },
];

const path = [
	'UML/SysML(English)',
	'SoftwareDesign',
	'SoftwareArchitecture',
	'APP',
	'ClassDiagram(AppLayer)',
];

const nodes = [
	{ title: 'Deviation', x: 231, y: 30, w: 292, h: 145, head: 25, abstract: true },
	{
		title: 'Target control amount\ncalculation',
		x: 713,
		y: 30,
		w: 181,
		h: 110,
		head: 40,
		isInterface: true,
	},
	{ title: 'Target control value', x: 685, y: 197, w: 236, h: 189, head: 25 },
	{ title: 'Vehicle speed deviation', x: 81, y: 245, w: 279, h: 94, head: 25 },
	{
		title: 'Inter-vehicular distance deviation',
		x: 399,
		y: 245,
		w: 222,
		h: 94,
		head: 25,
	},
	{
		title: 'Presence and\nabsence of\npreceding vehicle',
		x: 150,
		y: 416,
		w: 140,
		h: 134,
		head: 56,
	},
	{ title: 'C.C. control state', x: 375, y: 416, w: 269, h: 134, head: 25 },
	{ title: 'Own vehicle state', x: 763, y: 416, w: 190, h: 134, head: 25 },
];

/* ---------- parts ---------- */

const Big = ({ icon, lines, arrow, ...rest }) => (
	<BigButton {...rest}>
		<BigIcon>{icon}</BigIcon>
		{lines.map((line, i) => (
			<BigLine key={line}>
				{line}
				{arrow === 'inline' && i === lines.length - 1 && <Chevron size={8} />}
			</BigLine>
		))}
		{arrow === 'below' && (
			<BigLine>
				<Chevron size={8} />
			</BigLine>
		)}
	</BigButton>
);

const Small = ({ icon, children, arrow, tight }) => (
	<SmallButton disabled>
		<IconSlot>{icon}</IconSlot>
		<SmallLabel>{children}</SmallLabel>
		{arrow && (
			<ChevronSlot $tight={tight}>
				<Chevron color='#8b8b8b' />
			</ChevronSlot>
		)}
	</SmallButton>
);

const RibbonGroup = ({ label, width, pad, gap, children }) => (
	<Group $width={width} aria-label={label}>
		<GroupBody $pad={pad} $gap={gap}>
			{children}
		</GroupBody>
		<GroupLabel>{label}</GroupLabel>
	</Group>
);

const HomeRibbon = () => (
	<Ribbon>
		<RibbonGroup label='Clipboard' width={156} pad={8} gap={8}>
			<Big icon={<PasteIcon />} lines={['Paste']} disabled />
			<Column>
				<Small icon={<CutIcon />}>Cut</Small>
				<Small icon={<CopyIcon />} arrow>
					Copy
				</Small>
				<Small icon={<BrushIcon />}>Copy as Style</Small>
			</Column>
		</RibbonGroup>
		<RibbonGroup label='Model' width={101} pad={11} gap={9}>
			<Big icon={<ModelIcon />} lines={['Model']} arrow='below' />
			<Big icon={<CheckErrorIcon />} lines={['Check', 'Error']} arrow='inline' />
		</RibbonGroup>
		<RibbonGroup label='Trace' width={143} pad={10}>
			<Column>
				<Small icon={<RelationArrow />}>Previous Relation</Small>
				<Small icon={<RelationArrow down />}>Next Relation</Small>
			</Column>
		</RibbonGroup>
		<RibbonGroup label='Font' width={231} pad={7}>
			<Column>
				<Row>
					<SelectBox $width={136}>
						<select aria-label='Font family' disabled />
						<Chevron color='#333' />
					</SelectBox>
					<SelectBox $width={40}>
						<select aria-label='Font size' disabled />
						<Chevron color='#333' />
					</SelectBox>
				</Row>
				<Row>
					<ToolButton $width={25} aria-label='Grow font' disabled>
						<FontSizeIcon size={14} />
					</ToolButton>
					<ToolButton $width={22} aria-label='Shrink font' disabled>
						<FontSizeIcon size={12} down />
					</ToolButton>
					<ToolDivider />
					<ToolButton $width={30} aria-label='Clear formatting' disabled>
						<EraserIcon />
					</ToolButton>
					<ToolDivider />
					<LetterButton $width={30} $serif aria-label='Bold' disabled>
						B
					</LetterButton>
					<LetterButton $serif $italic aria-label='Italic' disabled>
						I
					</LetterButton>
					<LetterButton
						$line='underline'
						$size={12}
						aria-label='Underline'
						disabled
					>
						U
					</LetterButton>
					<LetterButton
						$line='line-through'
						$size={9}
						aria-label='Strike'
						disabled
					>
						abc
					</LetterButton>
					<LetterButton $size={11} aria-label='Subscript' disabled>
						<span>
							x<sub>2</sub>
						</span>
					</LetterButton>
					<LetterButton $size={11} aria-label='Superscript' disabled>
						<span>
							x<sup>2</sup>
						</span>
					</LetterButton>
				</Row>
				<Row $gap={8}>
					<ToolButton $gap={4} $width={30} aria-label='Highlight' disabled>
						<HighlightIcon />
						<Chevron />
					</ToolButton>
					<ToolButton $gap={4} $width={27} aria-label='Font colour' disabled>
						<FontColorIcon />
						<Chevron />
					</ToolButton>
				</Row>
			</Column>
		</RibbonGroup>
		<RibbonGroup label='Paragraph' width={103} pad={7}>
			<Column>
				<Row>
					<ToolButton aria-label='Bullets' disabled>
						<BulletIcon />
					</ToolButton>
					<ToolButton aria-label='Numbering' disabled>
						<NumberedIcon />
					</ToolButton>
				</Row>
				<Row>
					<ToolButton aria-label='Decrease indent' disabled>
						<IndentIcon out />
					</ToolButton>
					<ToolButton aria-label='Increase indent' disabled>
						<IndentIcon />
					</ToolButton>
				</Row>
				<Row>
					{['left', 'center', 'right', 'justify'].map(kind => (
						<ToolButton key={kind} aria-label={`Align ${kind}`} disabled>
							<AlignTextIcon kind={kind} />
						</ToolButton>
					))}
				</Row>
			</Column>
		</RibbonGroup>
		<RibbonGroup label='Style' width={156} pad={10} gap={6}>
			<Big
				icon={<QuickStyleIcon />}
				lines={['Quick', 'Style']}
				arrow='inline'
				disabled
			/>
			<Column>
				<Small icon={<FillIcon />} arrow>
					Fill Color
				</Small>
				<Small icon={<LineColorIcon />} arrow>
					Line Color
				</Small>
				<Small icon={<FigureIcon />} arrow tight>
					Figure
				</Small>
			</Column>
		</RibbonGroup>
		<RibbonGroup label='Alignment' width={143} pad={11} gap={8}>
			<Big icon={<AlignmentIcon />} lines={['Alignment']} arrow='below' />
			<Column>
				<ToolButton $gap={2} aria-label='Order'>
					<OrderIcon />
					<Chevron />
				</ToolButton>
				<ToolButton $gap={2} aria-label='Size'>
					<SizeIcon />
					<Chevron />
				</ToolButton>
				<ToolButton $gap={2} aria-label='Move to'>
					<MoveToIcon />
					<Chevron />
				</ToolButton>
			</Column>
			<Column>
				<ToolButton $gap={3} aria-label='Hierarchy' disabled>
					<HierarchyIcon />
					<Chevron color='#999' />
				</ToolButton>
				<ToolButton $gap={3} aria-label='Tree layout'>
					<TreeLayoutIcon />
					<Chevron />
				</ToolButton>
			</Column>
		</RibbonGroup>
		<RibbonGroup label='View' width={113} pad={10} gap={8}>
			<Big icon={<EditorIcon />} lines={['Editor']} disabled />
			<Big icon={<TraceIcon />} lines={['Trace']} />
			<Column>
				<ToolButton $width={18} aria-label='Swap' disabled>
					<SwapIcon />
				</ToolButton>
				<ToolButton $width={18} aria-label='Split view'>
					<SplitIcon />
				</ToolButton>
				<ToolButton $width={18} aria-label='Paint'>
					<PaintIcon />
				</ToolButton>
			</Column>
		</RibbonGroup>
		<RibbonGroup label='Edit' width={70} pad={10} gap={11}>
			<Column>
				<ToolButton $width={16} aria-label='Find'>
					<BinocularsIcon />
				</ToolButton>
				<ToolButton $width={16} aria-label='Replace'>
					<ReplaceIcon />
				</ToolButton>
				<ToolButton $gap={5} aria-label='Select'>
					<PointerIcon />
					<Chevron />
				</ToolButton>
			</Column>
			<Column>
				<ToolButton $width={16} aria-label='Delete' disabled>
					<DeleteIcon />
				</ToolButton>
			</Column>
		</RibbonGroup>
		<CollapseRibbon aria-label='Collapse ribbon'>
			<Chevron up size={10} color='#333' />
		</CollapseRibbon>
	</Ribbon>
);

const LeftPanel = () => {
	const [tab, setTab] = useState('New');
	const [selected, setSelected] = useState('SoftwareDesign');

	return (
		<Sidebar>
			<PanelTools>
				<button aria-label='Structure'>
					<StructureIcon />
				</button>
				<button aria-label='Documents'>
					<DocsIcon />
				</button>
				<button aria-label='Classes'>
					<ClassIcon color='#d5dae1' />
				</button>
			</PanelTools>
			<TreePanel>
				<TreeItem $root>
					<Caret $open>
						<Svg w={7} h={5}>
							<path d='M0 0.5H7L3.5 4.5z' fill='#222' />
						</Svg>
					</Caret>
					<ProjectIcon />
					UML/SysML(English)
				</TreeItem>
				<TreeList>
					{folders.map(name => (
						<li key={name}>
							<TreeItem
								$selected={name === selected}
								onClick={() => setSelected(name)}
							>
								<Caret>
									<Svg w={6} h={8}>
										<path d='M1 0L5 4L1 8z' fill='#3c3438' />
									</Svg>
								</Caret>
								<FolderIcon />
								{name}
							</TreeItem>
						</li>
					))}
				</TreeList>
			</TreePanel>
			<SearchRow>
				<SearchMode aria-label='Search mode'>
					<AbcIcon />
				</SearchMode>
				<KeywordInput $joined aria-label='Search model' placeholder='Keyword' />
				<FilterButton aria-label='Filter'>
					<FilterIcon />
				</FilterButton>
			</SearchRow>
			<Toolbox>
				<PanelTools>
					<button aria-label='Toolbox'>
						<ToolboxIcon />
					</button>
				</PanelTools>
				<TabStrip>
					{['New', 'Reference', 'Derive'].map(name => (
						<Tab key={name} $active={name === tab} onClick={() => setTab(name)}>
							{name}
						</Tab>
					))}
				</TabStrip>
				<ToolList>
					{elements.map(({ name, icon }) => (
						<li key={name}>
							<ToolItem>
								<IconSlot>{icon}</IconSlot>
								{name}
							</ToolItem>
						</li>
					))}
				</ToolList>
				<ToolboxSearch>
					<KeywordInput aria-label='Search toolbox' placeholder='Keyword' />
				</ToolboxSearch>
			</Toolbox>
		</Sidebar>
	);
};

const Connectors = () => (
	<Edges fill='none' stroke='#000' aria-hidden='true'>
		<path d='M259 244L310 183M476 244L434 184' />
		<path
			d='M316 175L305 179L314 187zM428 175L439 180L428 187zM803 140L797 151H810z'
			fill='#f2f2f2'
		/>
		<path
			d='M803.5 197V151M219.5 340V414M509.5 340V414M685 369L614 415'
			strokeDasharray='3 3'
		/>
		<path d='M213.5 405L219.5 415L225.5 405M503.5 405L509.5 415L515.5 405M618 405L613 415L624 415' />
		<path d='M657 482.5H762' />
		<path d='M645 482.5L652 477L659 482.5L652 488z' fill='#000' />
	</Edges>
);

const DiagramCanvas = () => (
	<Canvas>
		<Connectors />
		{nodes.map(node => (
			<NodeBox
				key={node.title}
				$x={node.x}
				$y={node.y}
				$w={node.w}
				$h={node.h}
				$green={node.isInterface}
			>
				<NodeHeader $h={node.head} $green={node.isInterface}>
					{node.isInterface ? <InterfaceIcon /> : <ClassIcon />}
					<NodeTitle $abstract={node.abstract}>{node.title}</NodeTitle>
				</NodeHeader>
			</NodeBox>
		))}
		<EdgeLabel $x={704} $y={464}>
			- CarState
		</EdgeLabel>
		<EdgeLabel $x={660} $y={487}>
			1
		</EdgeLabel>
		<EdgeLabel $x={733} $y={489}>
			0..1
		</EdgeLabel>
		<Palette>
			{elements.map(({ name, icon }) => (
				<button key={name} aria-label={name}>
					{icon}
				</button>
			))}
		</Palette>
		<Handle $side='left' aria-label='Collapse left panel'>
			<Svg w={4} h={6}>
				<path d='M4 0V6L0.5 3z' fill='#8d8589' />
			</Svg>
		</Handle>
		<Handle $side='right' aria-label='Expand right panel'>
			<Svg w={4} h={6}>
				<path d='M4 0V6L0.5 3z' fill='#8d8589' />
			</Svg>
		</Handle>
		<MouseCursor>
			<PointerIcon w={12} h={20} stroke='#222' />
		</MouseCursor>
	</Canvas>
);

const App = () => {
	const [menu, setMenu] = useState('Home');
	const [zoom, setZoom] = useState(25);

	return (
		<ThemeProvider theme={theme}>
			<GlobalStyle />
			<Window>
				<TitleBar>
					<QuickTools>
						<button aria-label='Save'>
							<SaveIcon />
						</button>
						<button aria-label='Open'>
							<OpenIcon />
						</button>
						<button aria-label='Undo'>
							<UndoIcon />
						</button>
						<button aria-label='Redo' disabled>
							<UndoIcon flip color='#4a79b8' />
						</button>
					</QuickTools>
					<WindowTitle>UML/SysML(English) - Next Design</WindowTitle>
					<WindowButtons>
						<button aria-label='Minimize'>
							<Svg w={10} h={10}>
								<path d='M0 5.5H10' stroke='#fff' />
							</Svg>
						</button>
						<button aria-label='Maximize'>
							<Svg w={10} h={10}>
								<path d='M0.5 0.5H9.5V9.5H0.5z' stroke='#fff' />
							</Svg>
						</button>
						<button aria-label='Close'>
							<Svg w={10} h={10}>
								<path d='M0 0L10 10M10 0L0 10' stroke='#fff' />
							</Svg>
						</button>
					</WindowButtons>
				</TitleBar>
				<MenuBar>
					{menus.map(name => (
						<MenuItem
							key={name}
							$active={name === menu}
							onClick={() => setMenu(name)}
						>
							{name}
						</MenuItem>
					))}
					<MenuActions>
						<button aria-label='Comments'>
							<CommentIcon />
						</button>
						<button aria-label='Hide menu'>
							<Chevron up size={9} color={c.brand} />
						</button>
					</MenuActions>
				</MenuBar>
				<HomeRibbon />
				<Main>
					<LeftPanel />
					<Document>
						<DocTabs>
							<DocTab>
								<DiagramIcon />
								ClassDiagram(AppLayer)
							</DocTab>
							<DocMenu aria-label='Open documents'>
								<Chevron size={8} />
							</DocMenu>
						</DocTabs>
						<PathBar>
							<ModeButton>M</ModeButton>
							<button aria-label='Back' disabled>
								<HistoryArrow />
							</button>
							<button aria-label='Forward' disabled>
								<HistoryArrow forward />
							</button>
							<Breadcrumb>
								{path.map(name => [
									<Svg key={`${name}-mark`} w={3} h={6}>
										<path d='M0 0L3 3L0 6z' fill='#000' />
									</Svg>,
									<a key={name} href='#path'>
										{name}
									</a>,
								])}
							</Breadcrumb>
							<ViewButton>ClassDiagram</ViewButton>
						</PathBar>
						<DiagramCanvas />
					</Document>
				</Main>
				<StatusBar>
					<PaneToggle $on aria-label='Left pane'>
						<LayoutIcon kind='left' />
					</PaneToggle>
					<PaneToggle aria-label='Bottom pane'>
						<LayoutIcon kind='bottom' />
					</PaneToggle>
					<PaneToggle aria-label='Right pane'>
						<LayoutIcon kind='right' />
					</PaneToggle>
					<button aria-label='Format'>
						<PaintIcon mono />
					</button>
					<button aria-label='Window settings'>
						<WindowGearIcon />
					</button>
					<Zoom>
						<label htmlFor='zoom'>100%</label>
						<button aria-label='Zoom out'>
							<Svg w={9} h={9}>
								<path d='M0 4.5H9' stroke='#6f6468' />
							</Svg>
						</button>
						<ZoomSlider
							id='zoom'
							type='range'
							value={zoom}
							onChange={e => setZoom(Number(e.target.value))}
						/>
						<button aria-label='Zoom in'>
							<Svg w={9} h={9}>
								<path d='M0 4.5H9M4.5 0V9' stroke='#6f6468' />
							</Svg>
						</button>
					</Zoom>
					<StatusEnd>
						<button aria-label='Fit'>
							<MoveIcon />
						</button>
						<button aria-label='Notifications'>
							<BellIcon />
						</button>
					</StatusEnd>
					<GripIcon />
				</StatusBar>
			</Window>
		</ThemeProvider>
	);
};

export default App;
